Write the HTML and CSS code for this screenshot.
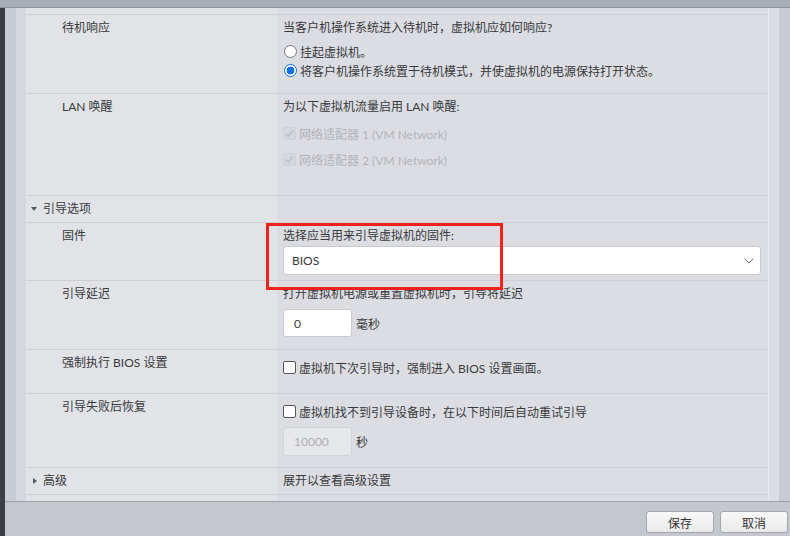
FILE: index.html
```html
<!DOCTYPE html>
<html lang="zh-CN">
<head>
<meta charset="utf-8">
<title>虚拟机选项</title>
<link rel="stylesheet" href="styles.css">
</head>
<body>
<div class="topbar"></div>
<div class="main">
  <div class="behind"></div>
  <div class="edge1"></div>
  <div class="edge2"></div>
  <div class="content">
    <div class="row r1">
      <div class="lab">待机响应</div>
      <div class="val">
        <div class="t">当客户机操作系统进入待机时，虚拟机应如何响应?</div>
        <div class="opt radio-line first"><span class="radio"></span>挂起虚拟机。</div>
        <div class="opt radio-line"><span class="radio on"></span>将客户机操作系统置于待机模式，并使虚拟机的电源保持打开状态。</div>
      </div>
    </div>
    <div class="row r2">
      <div class="lab">LAN 唤醒</div>
      <div class="val">
        <div class="t">为以下虚拟机流量启用 LAN 唤醒:</div>
        <div class="opt cb-line dis first"><span class="cb dis-on"><svg width="11" height="11" viewBox="0 0 11 11"><path d="M2 5.8 L4.4 8.2 L9 2.6" fill="none" stroke="#c4c5ca" stroke-width="2"/></svg></span>网络适配器 1 (VM Network)</div>
        <div class="opt cb-line dis"><span class="cb dis-on"><svg width="11" height="11" viewBox="0 0 11 11"><path d="M2 5.8 L4.4 8.2 L9 2.6" fill="none" stroke="#c4c5ca" stroke-width="2"/></svg></span>网络适配器 2 (VM Network)</div>
      </div>
    </div>
    <div class="row sec">
      <div class="lab head"><span class="caret down"></span>引导选项</div>
      <div class="val"></div>
    </div>
    <div class="row fw">
      <div class="lab">固件</div>
      <div class="val">
        <div class="t">选择应当用来引导虚拟机的固件:</div>
        <div class="select"><span>BIOS</span><svg width="10" height="6" viewBox="0 0 10 6"><path d="M0.5 0.5 L5 5 L9.5 0.5" fill="none" stroke="#6b6d72" stroke-width="1"/></svg></div>
      </div>
    </div>
    <div class="row delay">
      <div class="lab">引导延迟</div>
      <div class="val">
        <div class="t">打开虚拟机电源或重置虚拟机时，引导将延迟</div>
        <div class="inline m7"><span class="input">0</span><span class="unit">毫秒</span></div>
      </div>
    </div>
    <div class="row force">
      <div class="lab">强制执行 BIOS 设置</div>
      <div class="val">
        <div class="opt cb-line tall"><span class="cb"></span>虚拟机下次引导时，强制进入 BIOS 设置画面。</div>
      </div>
    </div>
    <div class="row fail">
      <div class="lab">引导失败后恢复</div>
      <div class="val">
        <div class="opt cb-line tall"><span class="cb"></span>虚拟机找不到引导设备时，在以下时间后自动重试引导</div>
        <div class="inline m4"><span class="input disabled">10000</span><span class="unit">秒</span></div>
      </div>
    </div>
    <div class="row adv">
      <div class="lab head"><span class="caret right"></span>高级</div>
      <div class="val"><div class="t">展开以查看高级设置</div></div>
    </div>
    <div class="row end"></div>
  </div>
  <div class="gutter"></div>
  <div class="track"></div>
</div>
<div class="footer">
  <button class="btn">保存</button>
  <button class="btn">取消</button>
</div>
<div class="annot"></div>
</body>
</html>
```
FILE: styles.css
```css
* { box-sizing: border-box; }
html, body { margin: 0; padding: 0; }
body {
  width: 790px;
  height: 536px;
  overflow: hidden;
  position: relative;
  font-family: "Lato", "Noto Sans CJK SC", sans-serif;
  font-size: 12px;
  color: #38393c;
  background: #3a3d43;
}
.topbar {
  height: 8px;
  background: #a9adb6;
  border-bottom: 1px solid #8f939b;
}
.main {
  display: flex;
  height: 493px;
}
.behind { width: 5px; background: #3a3d43; }
.edge1 { width: 11px; background: #c7cbd4; }
.edge2 { width: 10px; background: #d4d7de; }
.content {
  width: 742px;
  padding-top: 6px;
  background: linear-gradient(to right, #e2e3e7 251px, #dcdde2 251px);
}
.gutter { width: 11px; background: #dadde3; border-left: 1px solid #e6e8ec; }
.track { width: 11px; background: #c8cbd3; }

.row {
  display: grid;
  grid-template-columns: 251px 1fr;
  border-top: 1px solid #cfd0d5;
}
.r1 { height: 79px; }
.r2 { height: 102px; }
.sec { height: 27px; }
.fw { height: 58px; }
.delay { height: 69px; }
.force { height: 44px; }
.fail { height: 74px; }
.adv { height: 27px; }
.end { height: 6px; }

.lab {
  padding: 5px 0 0 36px;
  line-height: 16px;
}
.lab.head {
  padding-left: 5px;
  display: flex;
  align-items: center;
  align-self: start;
  margin-top: 5px;
  padding-top: 0;
  height: 16px;
}
.caret { width: 6px; margin-right: 6px; height: 0; }
.caret.down {
  border-left: 3px solid transparent;
  border-right: 3px solid transparent;
  border-top: 4px solid #55575c;
}
.caret.right {
  width: 0;
  margin-left: 2px;
  margin-right: 6px;
  border-top: 3.5px solid transparent;
  border-bottom: 3.5px solid transparent;
  border-left: 4px solid #55575c;
}
.val {
  padding: 5px 7px 0 6px;
}
.t { line-height: 16px; white-space: nowrap; }

.opt { display: flex; align-items: center; white-space: nowrap; }
.radio-line { height: 19px; }
.radio-line.first { margin-top: 6px; }
.radio {
  width: 13px; height: 13px;
  margin: 0 3px 0 1px;
  border-radius: 50%;
  background: #fff;
  border: 1px solid #76777b;
}
.radio.on {
  border: 1.5px solid #0b6fe8;
  background: radial-gradient(circle, #0b6fe8 0 3.6px, #fff 4.2px);
}
.cb-line { height: 26px; }
.cb-line.first { margin-top: 5px; }
.cb-line.tall { height: 24px; }
.cb {
  width: 13px; height: 13px;
  margin-right: 3px;
  border-radius: 2px;
  background: #fff;
  border: 1px solid #55575b;
  display: flex;
  align-items: center;
  justify-content: center;
}
.cb.dis-on {
  background: #d6d7dc;
  border-color: #d0d1d6;
}
.cb-line.dis { color: #b3b4b9; }

.select {
  margin-top: 2px;
  height: 29px;
  background: #fff;
  border: 1px solid #c9cacf;
  border-radius: 3px;
  display: flex;
  align-items: center;
  justify-content: space-between;
  padding: 0 6px 0 8px;
}
.inline { display: flex; align-items: center; }
.inline.m7 { margin-top: 7px; }
.inline.m4 { margin-top: 4px; }
.input {
  width: 69px;
  height: 28px;
  background: #fff;
  border: 1px solid #c9cacf;
  border-radius: 3px;
  padding-left: 10px;
  display: flex;
  align-items: center;
}
.input.disabled {
  height: 29px;
  background: #e6e7ea;
  border-color: #d3d4d8;
  color: #aeafb3;
}
.unit { margin-left: 4px; }

.footer {
  height: 35px;
  margin-left: 5px;
  border-top: 1px solid #9da0a7;
  background: #c4c7ce;
  display: flex;
  justify-content: flex-end;
  align-items: flex-start;
  gap: 6px;
  padding: 9px 2px 0 0;
}
.btn {
  font: inherit;
  color: #333;
  height: 22px;
  width: 68px;
  padding: 0;
  background: linear-gradient(#f9f9f9, #e9e9ea);
  border: 1px solid #a3a5aa;
  border-radius: 3px;
}

.annot {
  position: absolute;
  left: 266px;
  top: 223px;
  width: 237px;
  height: 67px;
  border: 3px solid #f2221b;
}
```
